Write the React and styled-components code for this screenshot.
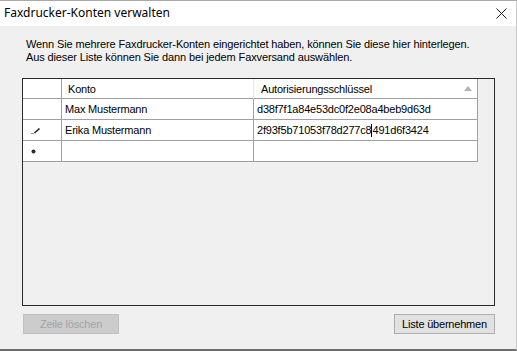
import React from "react";
import styled, { createGlobalStyle } from "styled-components";

const GlobalStyle = createGlobalStyle`
  html, body {
    margin: 0;
    padding: 0;
    background: #f0f0f0;
  }
  * {
    box-sizing: border-box;
  }
`;

const rows = [
  { konto: "Max Mustermann", key: "d38f7f1a84e53dc0f2e08a4beb9d63d" },
  { konto: "Erika Mustermann", key: "2f93f5b71053f78d277c8491d6f3424", caret: 21, editing: true },
];

const App = () => {
  return (
    <>
      <GlobalStyle />
      <Window>
        <TitleBar>
          <Title>Faxdrucker-Konten verwalten</Title>
          <CloseButton>
            <svg width="11" height="11" viewBox="0 0 11 11">
              <path d="M0.5 0.5 L10.5 10.5 M10.5 0.5 L0.5 10.5" stroke="#1a1a1a" strokeWidth="1" />
            </svg>
          </CloseButton>
        </TitleBar>
        <Content>
          <Description>
            Wenn Sie mehrere Faxdrucker-Konten eingerichtet haben, können Sie diese hier hinterlegen.
            <br />
            Aus dieser Liste können Sie dann bei jedem Faxversand auswählen.
          </Description>
          <GridView>
            <Table>
              <HeaderCell $rowHeader />
              <HeaderCell>Konto</HeaderCell>
              <HeaderCell>
                Autorisierungsschlüssel
                <SortGlyph>
                  <svg width="8" height="5" viewBox="0 0 8 5">
                    <path d="M0 5 L4 0 L8 5 Z" fill="#b4b4b4" />
                  </svg>
                </SortGlyph>
              </HeaderCell>
              {rows.map((r) => (
                <React.Fragment key={r.konto}>
                  <RowHeader>
                    {r.editing && (
                      <svg width="10" height="7" viewBox="0 0 10 7">
                        <path d="M0 6.5 L3 6.5" stroke="#9a9a9a" strokeWidth="1" />
                        <path d="M3.5 6 L8.5 1.5" stroke="#222" strokeWidth="1.6" />
                      </svg>
                    )}
                  </RowHeader>
                  <Cell>{r.konto}</Cell>
                  <Cell>
                    {r.caret ? (
                      <>
                        {r.key.slice(0, r.caret)}
                        <Caret />
                        {r.key.slice(r.caret)}
                      </>
                    ) : (
                      r.key
                    )}
                  </Cell>
                </React.Fragment>
              ))}
              <RowHeader>
                <svg width="5" height="5" viewBox="0 0 5 5">
                  <circle cx="2.5" cy="2.5" r="2" fill="#2a2a2a" />
                </svg>
              </RowHeader>
              <Cell />
              <Cell />
            </Table>
          </GridView>
          <Footer>
            <Button disabled>Zeile löschen</Button>
            <Button $wide>Liste übernehmen</Button>
          </Footer>
        </Content>
      </Window>
    </>
  );
};

export default App;

const Window = styled.div`
  width: 517px;
  height: 351px;
  display: flex;
  flex-direction: column;
  border-top: 1px solid #a8a8a8;
  border-right: 1px solid #c8c8c8;
  border-bottom: 2px solid #6e6e6e;
  background: #f0f0f0;
  font-family: "Liberation Sans", Arial, sans-serif;
  font-size: 11px;
  color: #000;
`;

const TitleBar = styled.div`
  height: 25px;
  background: #fff;
  display: flex;
  align-items: center;
  justify-content: space-between;
  padding: 0 9px 0 4px;
`;

const Title = styled.div`
  font-family: "Noto Sans", "Open Sans", sans-serif;
  font-size: 12px;
  color: #000;
  margin-top: -3px;
`;

const CloseButton = styled.div`
  display: flex;
  align-items: center;
  margin-top: -1px;
`;

const Content = styled.div`
  flex: 1;
  display: flex;
  flex-direction: column;
  padding: 12px 21px 0 22px;
`;

const Description = styled.div`
  padding-left: 4px;
  line-height: 13px;
  letter-spacing: -0.12px;
`;

const GridView = styled.div`
  margin-top: 14px;
  height: 228px;
  border: 1px solid #2a2a2a;
  background: #f0f0f0;
`;

const Table = styled.div`
  display: grid;
  grid-template-columns: 39px 192px 224px;
  grid-auto-rows: 21px;
  grid-template-rows: 20px;
  width: max-content;
`;

const HeaderCell = styled.div`
  position: relative;
  background: #fff;
  border-right: 1px solid ${(p) => (p.$rowHeader ? "#a0a0a0" : "#e5e5e5")};
  border-bottom: 1px solid #a0a0a0;
  display: flex;
  align-items: center;
  padding-left: 6px;
  letter-spacing: -0.2px;
  &:nth-child(3) {
    padding-left: 7px;
    border-right: 1px solid #a0a0a0;
  }
`;

const SortGlyph = styled.span`
  position: absolute;
  right: 5px;
  top: 7px;
  display: flex;
`;

const RowHeader = styled.div`
  background: #fff;
  border-right: 1px solid #a0a0a0;
  border-bottom: 1px solid #a0a0a0;
  display: flex;
  align-items: center;
  justify-content: flex-start;
  padding-left: 8px;
  padding-top: 1px;
`;

const Cell = styled.div`
  background: #fff;
  border-right: 1px solid #a0a0a0;
  border-bottom: 1px solid #a0a0a0;
  display: flex;
  align-items: center;
  padding-left: 3px;
  white-space: nowrap;
  letter-spacing: -0.2px;
`;

const Caret = styled.span`
  display: inline-block;
  width: 1px;
  height: 13px;
  background: #000;
`;

const Footer = styled.div`
  margin-top: 8px;
  display: flex;
  justify-content: space-between;
  padding-left: 1px;
`;

const Button = styled.button`
  height: 20px;
  width: ${(p) => (p.$wide ? "101px" : "96px")};
  font-family: "Liberation Sans", Arial, sans-serif;
  font-size: 11px;
  letter-spacing: -0.2px;
  padding: 0;
  color: #000;
  background: #e1e1e1;
  border: 1px solid #adadad;
  &:disabled {
    color: #a3a3a3;
    background: #cccccc;
    border-color: #bfbfbf;
  }
`;
